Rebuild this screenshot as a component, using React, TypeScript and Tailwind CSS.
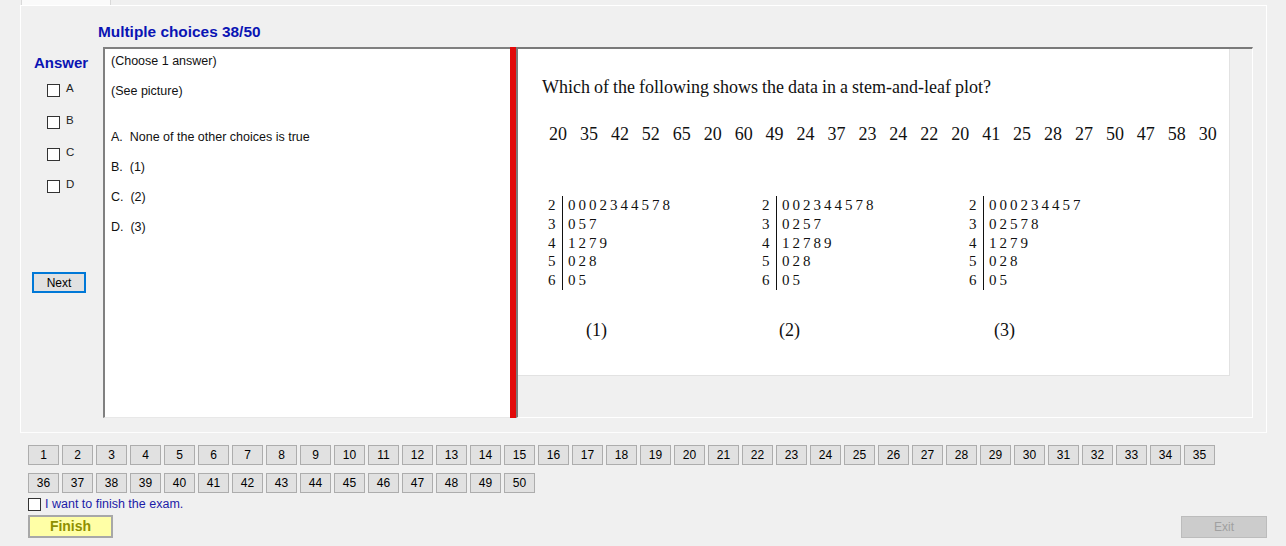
import React from "react";

const row1 = Array.from({ length: 35 }, (_, i) => i + 1);
const row2 = Array.from({ length: 15 }, (_, i) => i + 36);
const data = [20, 35, 42, 52, 65, 20, 60, 49, 24, 37, 23, 24, 22, 20, 41, 25, 28, 27, 50, 47, 58, 30];

const plots = [
  { leaves: ["0002344578", "057", "1279", "028", "05"], w: "w-[214px]", label: "(1)", lm: "ml-[38px]" },
  { leaves: ["002344578", "0257", "12789", "028", "05"], w: "w-[207px]", label: "(2)", lm: "ml-[17px]" },
  { leaves: ["000234457", "02578", "1279", "028", "05"], w: "w-[200px]", label: "(3)", lm: "ml-[25px]" },
];

function Box() {
  return <span className="inline-block w-[13px] h-[13px] border border-[#333333] bg-white shrink-0" />;
}

function NumBtn({ n }: { n: number }) {
  return (
    <div className="w-[31px] h-[20px] bg-[#e1e1e1] border border-[#adadad] flex items-center justify-center text-[12px] text-black leading-none">
      {n}
    </div>
  );
}

export default function App() {
  return (
    <div className="w-[1286px] h-[546px] bg-[#f0f0f0] font-['Liberation_Sans',Arial,sans-serif] overflow-hidden">
      {/* tab header */}
      <div className="h-[5px] flex">
        <div className="ml-[21px] w-[90px] h-[5px] bg-[#fafafa] border-l border-r border-[#d9d9d9]" />
      </div>
      {/* tab page */}
      <div className="ml-[20px] w-[1247px] h-[428px] border border-white border-b-[#fdfdfd] flex flex-col">
        <div className="h-[41px] pl-[77px] pt-[17px] text-[15.4px] leading-[17px] font-bold text-[#0a14b4]">
          Multiple choices 38/50
        </div>
        <div className="flex h-[371px]">
          {/* answer column */}
          <div className="w-[82px] flex flex-col pt-[7px]">
            <div className="ml-[13px] text-[15px] leading-[17px] font-bold text-[#0a14b4]">Answer</div>
            <div className="mt-[3px] flex flex-col">
              {["A", "B", "C", "D"].map((l) => (
                <div key={l} className="h-[32px] flex items-center pl-[26px]">
                  <Box />
                  <span className="ml-[6px] text-[11.5px] text-[#222] leading-none -mt-[2px]">{l}</span>
                </div>
              ))}
            </div>
            <div className="mt-[70px] ml-[11px] w-[54px] h-[21px] border-2 border-[#0078d7] bg-[#e1e1e1] flex items-center justify-center text-[12px] text-black">
              Next
            </div>
          </div>
          {/* left text pane */}
          <div className="w-[407px] h-[371px] bg-white border-t-2 border-l-2 border-[#808080] border-b border-b-[#e8e8e8] pl-[6px] pt-[5px] text-[12.5px] leading-[15px] text-[#111]">
            <div>(Choose 1 answer)</div>
            <div className="mt-[15px]">(See picture)</div>
            <div className="mt-[31px]">A.&nbsp; None of the other choices is true</div>
            <div className="mt-[15px]">B.&nbsp; (1)</div>
            <div className="mt-[15px]">C.&nbsp; (2)</div>
            <div className="mt-[15px]">D.&nbsp; (3)</div>
          </div>
          {/* splitter */}
          <div className="w-[6px] h-[371px] bg-[#e20a0a]" />
          {/* right pane */}
          <div className="w-[737px] h-[371px] bg-[#f0f0f0] border-t-2 border-l-2 border-[#7a7a7a] border-r border-b border-r-white border-b-white">
            <div className="w-[712px] h-[327px] bg-white border-r border-b border-[#e2e2e2] pl-[24px] pt-[28px] font-['Liberation_Serif','Times_New_Roman',serif] text-[#111]">
              <div className="text-[18px] leading-[20px] [word-spacing:-0.5px]">
                Which of the following shows the data in a stem-and-leaf plot?
              </div>
              <div className="mt-[27px] ml-[7px] flex text-[18px] leading-[20px]">
                {data.map((d, i) => (
                  <span key={i} className="w-[30.95px] shrink-0">{d}</span>
                ))}
              </div>
              <div className="mt-[52px] ml-[6px] flex">
                {plots.map((p, i) => (
                  <div key={i} className={`${p.w} flex flex-col`}>
                    <div className="flex text-[15px] leading-[18.75px]">
                      <div className="w-[14px] flex flex-col">
                        {[2, 3, 4, 5, 6].map((s) => (
                          <span key={s}>{s}</span>
                        ))}
                      </div>
                      <div className="border-l border-[#111] pl-[5px] flex flex-col tracking-[3px]">
                        {p.leaves.map((l, j) => (
                          <span key={j}>{l}</span>
                        ))}
                      </div>
                    </div>
                    <div className={`${p.lm} mt-[30px] text-[18px] leading-[20px]`}>{p.label}</div>
                  </div>
                ))}
              </div>
            </div>
          </div>
        </div>
      </div>
      {/* bottom */}
      <div className="pl-[28px] pt-[12px] flex flex-col">
        <div className="flex gap-[3px]">
          {row1.map((n) => (
            <NumBtn key={n} n={n} />
          ))}
        </div>
        <div className="flex gap-[3px] mt-[8px]">
          {row2.map((n) => (
            <NumBtn key={n} n={n} />
          ))}
        </div>
        <div className="flex items-center mt-[4px] h-[14px]">
          <Box />
          <span className="ml-[4px] text-[12.5px] leading-none text-[#1c1ca8]">I want to finish the exam.</span>
        </div>
        <div className="flex justify-between items-center mt-[4px] pr-[19px]">
          <div className="w-[85px] h-[23px] border-2 border-[#a8a8a8] bg-[#ffffa6] flex items-center justify-center text-[14px] font-bold text-[#8f8f00]">
            Finish
          </div>
          <div className="w-[86px] h-[22px] border border-[#bcbcbc] bg-[#cccccc] flex items-center justify-center text-[12px] text-[#a0a0a0]">
            Exit
          </div>
        </div>
      </div>
    </div>
  );
}
